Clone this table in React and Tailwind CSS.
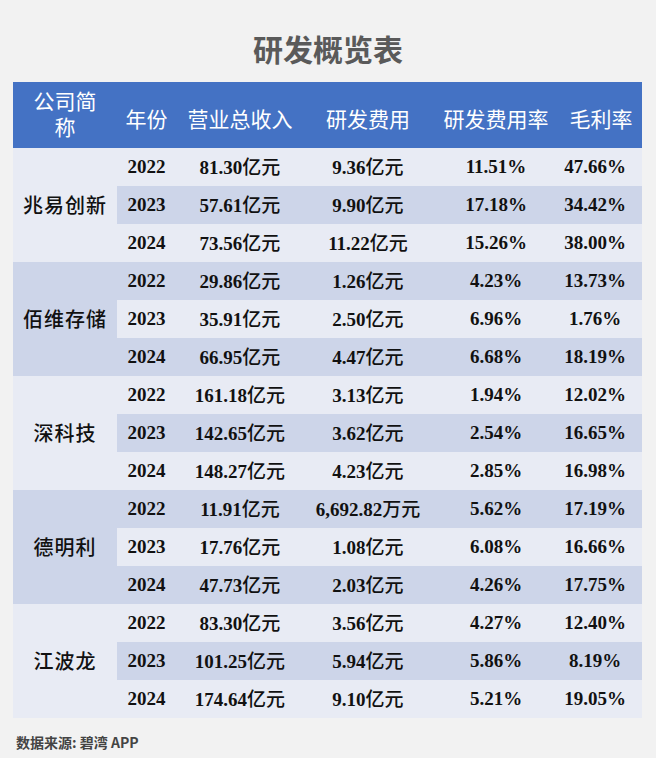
import React from "react";

const groups = [
  {
    name: "兆易创新",
    rows: [
      ["2022", "81.30", "亿元", "9.36", "亿元", "11.51%", "47.66%"],
      ["2023", "57.61", "亿元", "9.90", "亿元", "17.18%", "34.42%"],
      ["2024", "73.56", "亿元", "11.22", "亿元", "15.26%", "38.00%"],
    ],
  },
  {
    name: "佰维存储",
    rows: [
      ["2022", "29.86", "亿元", "1.26", "亿元", "4.23%", "13.73%"],
      ["2023", "35.91", "亿元", "2.50", "亿元", "6.96%", "1.76%"],
      ["2024", "66.95", "亿元", "4.47", "亿元", "6.68%", "18.19%"],
    ],
  },
  {
    name: "深科技",
    rows: [
      ["2022", "161.18", "亿元", "3.13", "亿元", "1.94%", "12.02%"],
      ["2023", "142.65", "亿元", "3.62", "亿元", "2.54%", "16.65%"],
      ["2024", "148.27", "亿元", "4.23", "亿元", "2.85%", "16.98%"],
    ],
  },
  {
    name: "德明利",
    rows: [
      ["2022", "11.91", "亿元", "6,692.82", "万元", "5.62%", "17.19%"],
      ["2023", "17.76", "亿元", "1.08", "亿元", "6.08%", "16.66%"],
      ["2024", "47.73", "亿元", "2.03", "亿元", "4.26%", "17.75%"],
    ],
  },
  {
    name: "江波龙",
    rows: [
      ["2022", "83.30", "亿元", "3.56", "亿元", "4.27%", "12.40%"],
      ["2023", "101.25", "亿元", "5.94", "亿元", "5.86%", "8.19%"],
      ["2024", "174.64", "亿元", "9.10", "亿元", "5.21%", "19.05%"],
    ],
  },
];

const LIGHT = "bg-[#e8ebf4]";
const DARK = "bg-[#cdd5e9]";

const num = "font-['Liberation_Serif','Noto_Sans_CJK_SC',serif] font-bold";
const cjk = "font-['Noto_Sans_CJK_SC',sans-serif]";

function Money({ v, unit }) {
  return (
    <span className="whitespace-nowrap">
      <span className={num}>{v}</span>
      <span className={`${cjk} font-medium`}>{unit}</span>
    </span>
  );
}

function Row({ r, bg }) {
  const cell = `h-[38px] flex items-center justify-center text-[19px] text-[#111] ${bg}`;
  return (
    <>
      <div className={`${cell} ${num}`}>{r[0]}</div>
      <div className={cell}>
        <Money v={r[1]} unit={r[2]} />
      </div>
      <div className={cell}>
        <Money v={r[3]} unit={r[4]} />
      </div>
      <div className={`${cell} ${num}`}>{r[5]}</div>
      <div className={`${cell} ${num} pr-[12px]`}>{r[6]}</div>
    </>
  );
}

export default function App() {
  return (
    <div className="w-[656px] h-[758px] bg-[#f2f2f2] overflow-hidden">
      <h1
        className={`${cjk} pt-[30px] h-[82px] text-center text-[30px] leading-[36px] font-bold text-[#5a5a5a]`}
      >
        研发概览表
      </h1>

      <div className="mx-[13px] grid grid-cols-[104px_59px_128px_128px_128px_82px]">
        {/* header */}
        {[
          ["公司简", "称"],
          ["年份"],
          ["营业总收入"],
          ["研发费用"],
          ["研发费用率"],
          ["毛利率"],
        ].map((h, i) => (
          <div
            key={i}
            className={`${cjk} h-[66px] bg-[#4472c4] text-white text-[21px] flex flex-col items-center justify-center whitespace-nowrap ${
              i === 0 ? "leading-[26px] pb-[4px]" : "leading-[30px] pt-[6px]"
            }`}
          >
            {h.map((t) => (
              <span key={t}>{t}</span>
            ))}
          </div>
        ))}

        {/* body */}
        {groups.map((g, gi) => {
          const base = gi % 2 === 0 ? LIGHT : DARK;
          const alt = gi % 2 === 0 ? DARK : LIGHT;
          return (
            <React.Fragment key={g.name}>
              <div
                className={`${cjk} row-span-3 flex items-center justify-center text-[20px] font-medium text-[#111] tracking-[1px] ${base}`}
              >
                {g.name}
              </div>
              <Row r={g.rows[0]} bg={base} />
              <Row r={g.rows[1]} bg={alt} />
              <Row r={g.rows[2]} bg={base} />
            </React.Fragment>
          );
        })}
      </div>

      <div
        className={`${cjk} mt-[14px] ml-[16px] text-[14px] leading-[20px] font-bold text-[#444]`}
      >
        数据来源: 碧湾 APP
      </div>
    </div>
  );
}
